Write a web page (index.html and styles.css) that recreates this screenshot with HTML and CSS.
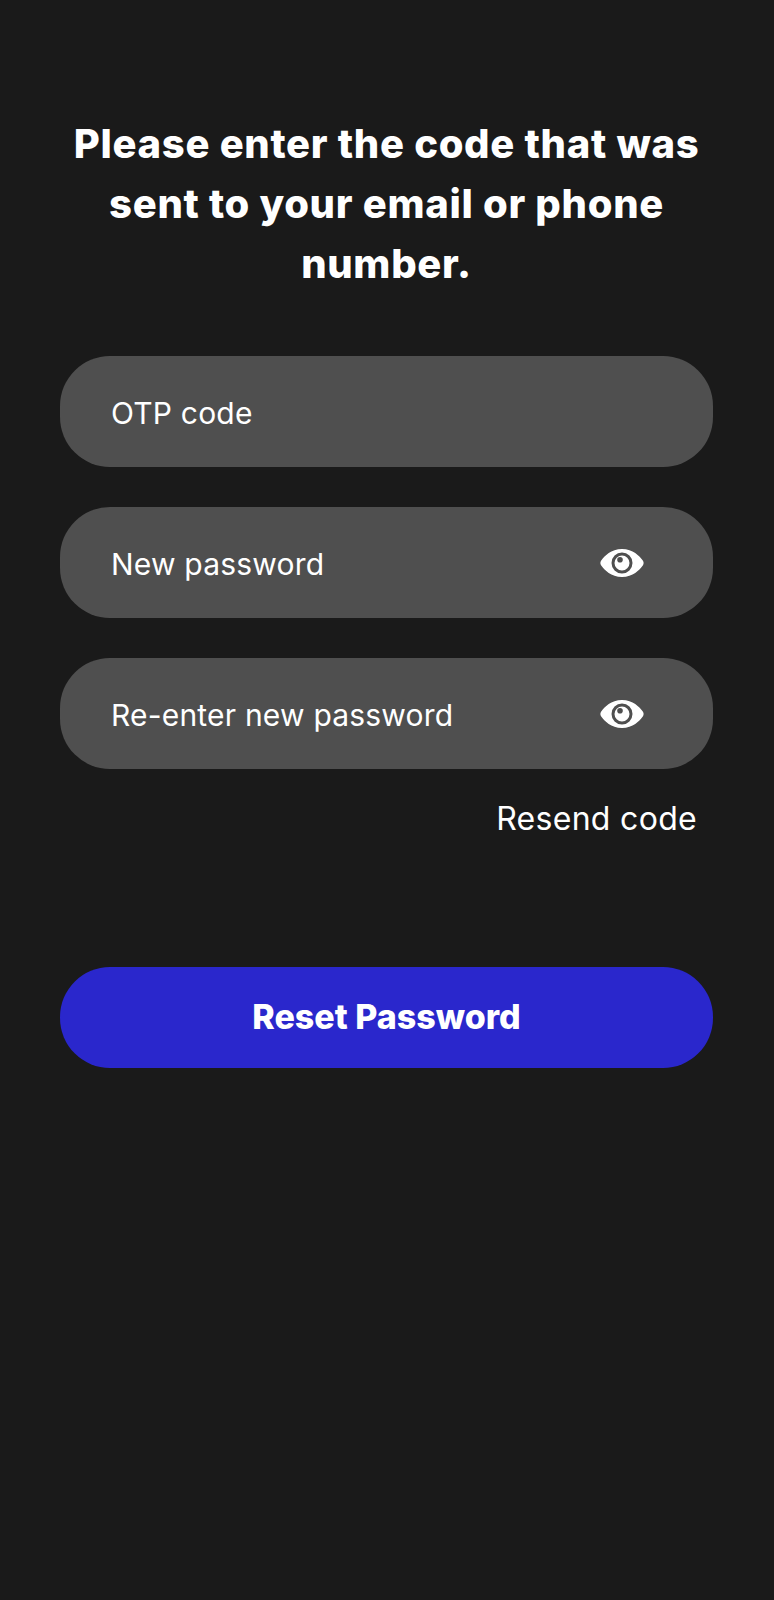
FILE: index.html
```html
<!DOCTYPE html>
<html lang="en">
<head>
    <meta charset="UTF-8">
    <meta name="viewport" content="width=device-width, initial-scale=1.0">
    <title>Reset Password</title>
    <link rel="stylesheet" href="styles.css">
</head>
<body>
    <div class="container">
        <h1 class="title">Please enter the code that was<br>sent to your email or phone<br>number.</h1>
        <div class="field"><span class="field-label">OTP code</span></div>
        <div class="field">
            <span class="field-label">New password</span>
            <svg class="eye" viewBox="0 0 44 30"><path fill="#fff" fill-rule="evenodd" d="M22 1C33 1 39.500 8 42.800 12.500c1.100 1.600 1.100 3.400 0 5C39.500 22 33 29 22 29S4.500 22 1.200 17.500c-1.100-1.600-1.100-3.400 0-5C4.500 8 11 1 22 1zm0 3.500a10.500 10.500 0 1 0 0 21 10.500 10.500 0 0 0 0-21z"/><path fill="#fff" fill-rule="evenodd" d="M22 7.500a7.500 7.500 0 1 0 0 15 7.500 7.500 0 0 0 0-15zm-2 1.500a2.800 2.800 0 1 1 0 5.600 2.800 2.800 0 0 1 0-5.600z"/></svg>
        </div>
        <div class="field">
            <span class="field-label">Re-enter new password</span>
            <svg class="eye" viewBox="0 0 44 30"><path fill="#fff" fill-rule="evenodd" d="M22 1C33 1 39.500 8 42.800 12.500c1.100 1.600 1.100 3.400 0 5C39.500 22 33 29 22 29S4.500 22 1.200 17.500c-1.100-1.600-1.100-3.400 0-5C4.500 8 11 1 22 1zm0 3.500a10.500 10.500 0 1 0 0 21 10.500 10.500 0 0 0 0-21z"/><path fill="#fff" fill-rule="evenodd" d="M22 7.500a7.500 7.500 0 1 0 0 15 7.500 7.500 0 0 0 0-15zm-2 1.500a2.800 2.800 0 1 1 0 5.600 2.800 2.800 0 0 1 0-5.600z"/></svg>
        </div>
        <div class="resend">Resend code</div>
        <button class="submit">Reset Password</button>
    </div>
</body>
</html>
```

FILE: styles.css
```css
body {
    margin: 0;
    min-height: 1600px;
    background-color: #1a1a1a;
    color: #fff;
    font-family: "Inter", "Liberation Sans", sans-serif;
}
.container {
    display: flex;
    flex-direction: column;
    padding: 114px 61px 0 60px;
}
.title {
    margin: 0 0 62px;
    font-size: 40px;
    font-weight: 800;
    letter-spacing: 0.7px;
    line-height: 60px;
    text-align: center;
    white-space: nowrap;
}
.field {
    display: flex;
    align-items: center;
    justify-content: space-between;
    height: 111px;
    margin-bottom: 40px;
    padding: 0 69px 0 51px;
    background-color: #4f4f4f;
    border-radius: 50px;
}
.field:nth-of-type(3) {
    margin-bottom: 0;
}
.field-label {
    padding-top: 3px;
    font-size: 30px;
    letter-spacing: 0.2px;
}
.eye {
    width: 44px;
    height: 30px;
}
.resend {
    align-self: flex-end;
    margin: 30px 16px 0 0;
    font-size: 32px;
    letter-spacing: 0.3px;
    line-height: 40px;
}
.submit {
    height: 101px;
    margin-top: 128px;
    padding-bottom: 3px;
    font-family: inherit;
    font-size: 34px;
    font-weight: 800;
    color: #fff;
    background-color: #2a27cc;
    border: none;
    border-radius: 50px;
}
```
